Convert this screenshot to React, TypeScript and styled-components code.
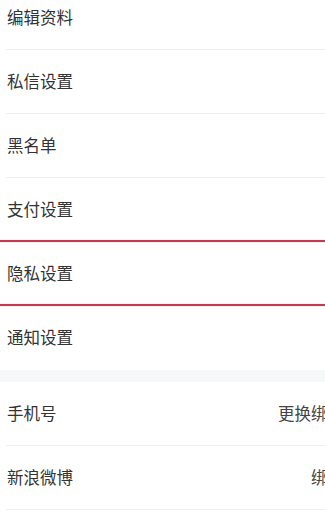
import React from "react";
import styled, { createGlobalStyle, css } from "styled-components";

const GlobalStyle = createGlobalStyle`
  html, body {
    margin: 0;
    padding: 0;
    background: #ffffff;
    overflow: hidden;
  }
  body {
    font-family: "Noto Sans CJK SC", "Noto Sans", sans-serif;
    -webkit-font-smoothing: antialiased;
  }
`;

const Page = styled.div`
  width: 356px;
  margin-top: -14px;
  background: #ffffff;
`;

const Group = styled.section`
  display: flex;
  flex-direction: column;
  background: #ffffff;
`;

const GroupGap = styled.div`
  height: 12px;
  background: #f6f7f9;
`;

const Row = styled.div<{ $highlight?: boolean; $last?: boolean }>`
  position: relative;
  height: 63px;
  margin-left: 6px;
  padding: 0 12px 0 1px;
  display: flex;
  align-items: center;
  justify-content: space-between;
  border-bottom: 1px solid ${(p) => (p.$last ? "transparent" : "#efefef")};

  ${(p) =>
    p.$highlight &&
    css`
      border-bottom-color: transparent;
      &::before,
      &::after {
        content: "";
        position: absolute;
        left: -6px;
        right: 0;
        height: 2px;
        background: #c23a4b;
        box-shadow: 0 0 1px rgba(194, 58, 75, 0.6);
      }
      &::before {
        top: -2px;
      }
      &::after {
        bottom: -1px;
      }
    `}
`;

const Label = styled.span`
  font-size: 16.5px;
  color: #333333;
  line-height: 1;
`;

const Extra = styled.span`
  font-size: 16.5px;
  color: #444444;
  line-height: 1;
`;

type Item = { label: string; extra?: string; highlight?: boolean; last?: boolean };

const groupA: Item[] = [
  { label: "编辑资料" },
  { label: "私信设置" },
  { label: "黑名单" },
  { label: "支付设置" },
  { label: "隐私设置", highlight: true },
  { label: "通知设置", last: true },
];

const groupB: Item[] = [
  { label: "手机号", extra: "更换绑定" },
  { label: "新浪微博", extra: "绑定" },
];

const renderRow = (it: Item) => (
  <Row key={it.label} $highlight={it.highlight} $last={it.last}>
    <Label>{it.label}</Label>
    {it.extra && <Extra>{it.extra}</Extra>}
  </Row>
);

export default function App() {
  return (
    <>
      <GlobalStyle />
      <Page>
        <Group>{groupA.map(renderRow)}</Group>
        <GroupGap />
        <Group>{groupB.map(renderRow)}</Group>
      </Page>
    </>
  );
}
